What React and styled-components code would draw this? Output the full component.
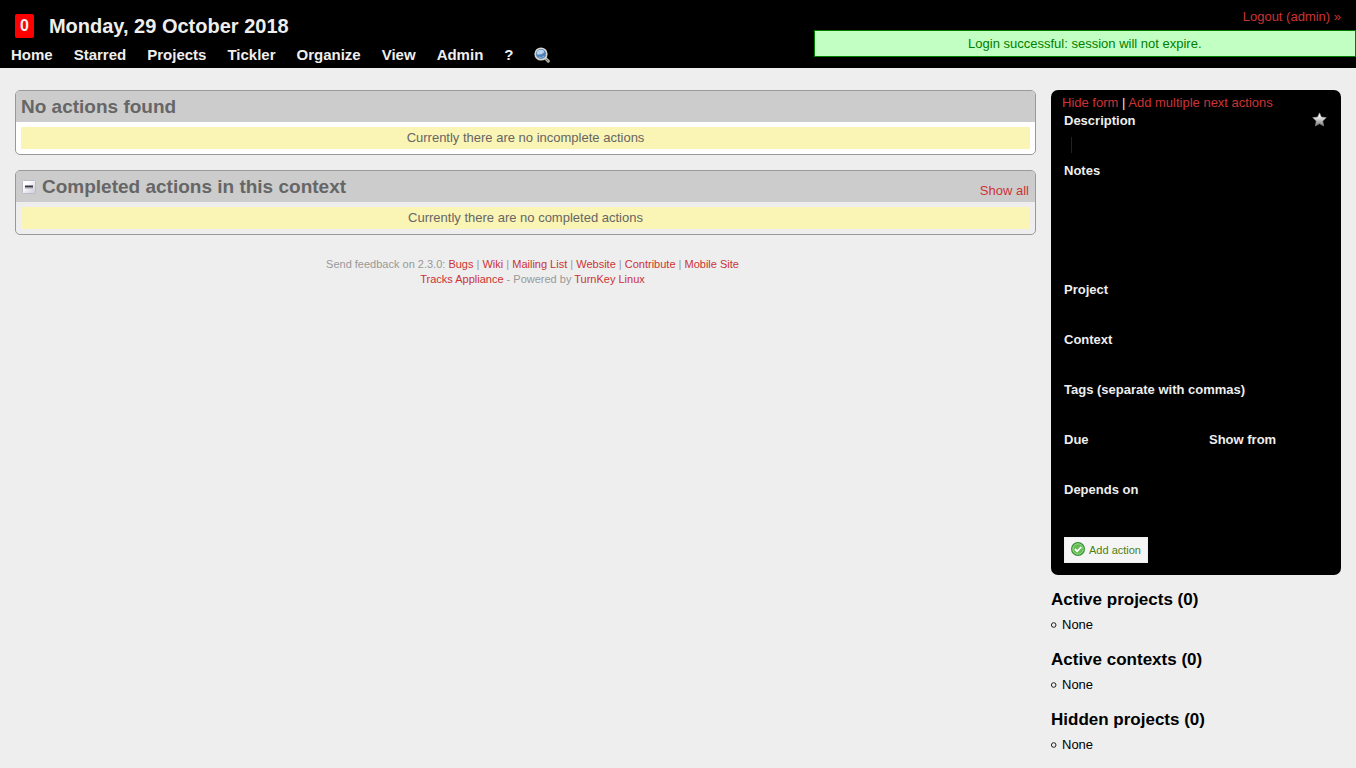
import styled, { createGlobalStyle } from "styled-components";

const GlobalStyle = createGlobalStyle`
  * {
    box-sizing: border-box;
  }
  body {
    margin: 0;
    background: #eee;
    color: #000;
    font-family: "Liberation Sans", Arial, sans-serif;
    font-size: 13px;
    line-height: 18px;
  }
  a {
    color: #cc3334;
    text-decoration: none;
  }
`;

const TopBar = styled.header`
  position: relative;
  background: #000;
  color: #eee;
`;

const DateRow = styled.div`
  display: flex;
  align-items: center;
  gap: 15px;
  padding: 14px 15px 4px;
`;

const Badge = styled.a`
  background: #f00;
  border-radius: 2px;
  padding: 0 5px;
  color: #eee;
  font-size: 16px;
  font-weight: bold;
  line-height: 24px;
`;

const Today = styled.h1`
  margin: 0;
  font-size: 20px;
  line-height: 24px;
`;

const Logout = styled.a`
  margin-left: auto;
  align-self: flex-start;
  line-height: 6px;
`;

const Nav = styled.nav`
  display: flex;
  align-items: center;
  gap: 21px;
  padding: 0 11px;
`;

const NavLink = styled.a`
  display: flex;
  color: #eee;
  font-size: 15px;
  font-weight: bold;
  line-height: 26px;
`;

const Flash = styled.div`
  position: absolute;
  top: 30px;
  right: 0;
  width: 40%;
  border: 1px solid #007e00;
  background: #c2ffc2;
  color: #007e00;
  line-height: 25px;
  text-align: center;
`;

const Content = styled.div`
  display: grid;
  grid-template-columns: minmax(0, 1fr) 290px;
  gap: 15px;
  padding: 22px 15px 0;
`;

const Panel = styled.section`
  margin-bottom: 15px;
  border: 1px solid #999;
  border-radius: 5px;
  background: ${(props) => (props.$plain ? "transparent" : "#fff")};
  overflow: hidden;
`;

const PanelHeader = styled.div`
  display: flex;
  align-items: center;
  gap: 6px;
  padding: 0 6px 0 5px;
  background: #ccc;
  color: #666;
`;

const PanelTitle = styled.h2`
  margin: 0;
  font-size: 19px;
  line-height: 31px;
`;

const ToggleButton = styled.button`
  display: flex;
  padding: 0;
  border: 0;
  background: none;
`;

const ShowAll = styled.a`
  margin-left: auto;
  align-self: flex-end;
  line-height: 22px;
`;

const Notice = styled.p`
  margin: 5px;
  background: #faf4b5;
  color: #666;
  line-height: 22px;
  text-align: center;
`;

const Footer = styled.footer`
  padding: 7px 0 0 14px;
  color: #999;
  font-size: 11px;
  line-height: 15px;
  text-align: center;
`;

const FormBox = styled.div`
  margin-bottom: 13px;
  padding: 4px 11px 12px;
  border-radius: 7px;
  background: #000;
  color: #eee;
`;

const Form = styled.form`
  display: grid;
  grid-template-columns: 145px 1fr;
  padding: 0 3px 0 2px;
`;

const Field = styled.div`
  grid-column: ${(props) => (props.$half ? "auto" : "1 / -1")};
  display: flex;
  flex-direction: column;
`;

const LabelRow = styled.div`
  display: flex;
  justify-content: space-between;
  align-items: flex-start;
`;

const Label = styled.label`
  font-weight: bold;
`;

const TextInput = styled.input`
  width: 100%;
  height: 16px;
  margin: 7px 0 9px;
  padding: 0 7px;
  border: 0;
  outline: 0;
  background: #000;
  color: #eee;
  font: inherit;
`;

const CaretInput = styled(TextInput)`
  width: calc(100% - 7px);
  margin-left: 7px;
  border-left: 1px solid #222;
`;

const NotesInput = styled.textarea`
  height: 94px;
  margin: 0 0 7px;
  padding: 4px 7px;
  border: 0;
  outline: 0;
  resize: none;
  background: #000;
  color: #eee;
  font: inherit;
`;

const AddButton = styled.button`
  grid-column: 1 / -1;
  justify-self: start;
  display: flex;
  align-items: center;
  gap: 4px;
  margin-top: 6px;
  padding: 0 6px;
  border: 1px solid #eee;
  background: #f5f5f5;
  color: #498111;
  font-family: inherit;
  font-size: 11px;
  line-height: 24px;
`;

const SideTitle = styled.h3`
  margin: 0;
  font-size: 17px;
  line-height: 24px;
`;

const SideList = styled.ul`
  margin: 4px 0 14px;
  padding: 0;
  list-style: none;
`;

const SideItem = styled.li`
  display: flex;
  align-items: center;
  gap: 5px;
`;

const SearchIcon = () => (
  <svg width="16" height="16" viewBox="0 0 16 16">
    <path d="M11 11 14.300 14.200" stroke="#b5b5b0" strokeWidth="3" strokeLinecap="round" />
    <path d="M11.500 11.500 14 14" stroke="#777" strokeWidth="1" strokeLinecap="round" />
    <circle cx="7" cy="7" r="5.800" fill="#4f80b8" stroke="#d8d5cc" strokeWidth="1.600" />
    <path d="M3 7.500a4 4 0 0 1 7-3.500C10.500 6.500 7 8 3 7.500Z" fill="#b7d3f0" />
    <path d="M4.500 10a4 4 0 0 0 5.500-1" fill="none" stroke="#8fb9e4" strokeWidth="1" />
  </svg>
);

const MinusIcon = () => (
  <svg width="15" height="15" viewBox="0 0 15 15">
    <defs>
      <linearGradient id="minus" x2="1" y2="1">
        <stop offset="0.3" stopColor="#fff" />
        <stop offset="1" stopColor="#c8c8d6" />
      </linearGradient>
    </defs>
    <rect x="1.500" y="1.500" width="13" height="13" rx="1" fill="url(#minus)" stroke="#bbbbc6" />
    <path d="M4 7.500h8" stroke="#34343f" strokeWidth="2" />
    <path d="M4 9h8" stroke="#9a9aa8" strokeWidth="1" />
  </svg>
);

const StarIcon = () => (
  <svg width="15" height="15" viewBox="0 0 15 15">
    <defs>
      <linearGradient id="star" x2="0" y2="1">
        <stop offset="0.2" stopColor="#fff" />
        <stop offset="1" stopColor="#777" />
      </linearGradient>
    </defs>
    <path
      d="M7.500 .8 9.400 5l5 .6-3.600 3.400.9 5-4.200-2.300L3.300 14l.9-5L.6 5.600l5-.6Z"
      fill="url(#star)"
      stroke="#888"
      strokeWidth=".6"
    />
  </svg>
);

const CheckIcon = () => (
  <svg width="14" height="16" viewBox="0 0 14 16">
    <circle cx="7" cy="7" r="6.400" fill="#64bd53" stroke="#399337" strokeWidth="1.200" />
    <circle cx="7" cy="7" r="5.200" fill="none" stroke="#a4dc96" strokeWidth=".8" />
    <path d="m3.900 7 2.300 2.300 4-4.300" fill="none" stroke="#fff" strokeWidth="1.800" />
  </svg>
);

const Bullet = () => (
  <svg width="6" height="6" viewBox="0 0 6 6">
    <circle cx="2.700" cy="3" r="2.300" fill="none" stroke="#222" />
  </svg>
);

const menu = ["Home", "Starred", "Projects", "Tickler", "Organize", "View", "Admin", "?"];
const feedback = ["Bugs", "Wiki", "Mailing List", "Website", "Contribute", "Mobile Site"];
const sideLists = ["Active projects (0)", "Active contexts (0)", "Hidden projects (0)"];

const InputField = ({ id, label, half }) => (
  <Field $half={half}>
    <Label htmlFor={id}>{label}</Label>
    <TextInput id={id} type="text" />
  </Field>
);

const App = () => {
  return (
    <>
      <GlobalStyle />
      <TopBar>
        <DateRow>
          <Badge href="#count">0</Badge>
          <Today>Monday, 29 October 2018</Today>
          <Logout href="#logout">Logout (admin) »</Logout>
        </DateRow>
        <Nav>
          {menu.map((item) => (
            <NavLink key={item} href={`#${item}`}>
              {item}
            </NavLink>
          ))}
          <NavLink href="#search" aria-label="Search">
            <SearchIcon />
          </NavLink>
        </Nav>
        <Flash role="status">Login successful: session will not expire.</Flash>
      </TopBar>
      <Content>
        <main>
          <Panel>
            <PanelHeader>
              <PanelTitle>No actions found</PanelTitle>
            </PanelHeader>
            <Notice>Currently there are no incomplete actions</Notice>
          </Panel>
          <Panel $plain>
            <PanelHeader>
              <ToggleButton type="button" aria-label="Collapse">
                <MinusIcon />
              </ToggleButton>
              <PanelTitle>Completed actions in this context</PanelTitle>
              <ShowAll href="#done">Show all</ShowAll>
            </PanelHeader>
            <Notice>Currently there are no completed actions</Notice>
          </Panel>
          <Footer>
            <div>
              Send feedback on 2.3.0:{" "}
              {feedback.map((item, i) => (
                <span key={item}>
                  {i > 0 && " | "}
                  <a href={`#${item}`}>{item}</a>
                </span>
              ))}
            </div>
            <div>
              <a href="#appliance">Tracks Appliance</a> - Powered by <a href="#turnkey">TurnKey Linux</a>
            </div>
          </Footer>
        </main>
        <aside>
          <FormBox>
            <div>
              <a href="#hide">Hide form</a> | <a href="#multiple">Add multiple next actions</a>
            </div>
            <Form>
              <Field>
                <LabelRow>
                  <Label htmlFor="description">Description</Label>
                  <ToggleButton type="button" aria-label="Star">
                    <StarIcon />
                  </ToggleButton>
                </LabelRow>
                <CaretInput id="description" type="text" />
              </Field>
              <Field>
                <Label htmlFor="notes">Notes</Label>
                <NotesInput id="notes" />
              </Field>
              <InputField id="project" label="Project" />
              <InputField id="context" label="Context" />
              <InputField id="tags" label="Tags (separate with commas)" />
              <InputField id="due" label="Due" half />
              <InputField id="show-from" label="Show from" half />
              <InputField id="depends" label="Depends on" />
              <AddButton type="submit">
                <CheckIcon />
                Add action
              </AddButton>
            </Form>
          </FormBox>
          {sideLists.map((title) => (
            <section key={title}>
              <SideTitle>{title}</SideTitle>
              <SideList>
                <SideItem>
                  <Bullet />
                  None
                </SideItem>
              </SideList>
            </section>
          ))}
        </aside>
      </Content>
    </>
  );
};

export default App;
